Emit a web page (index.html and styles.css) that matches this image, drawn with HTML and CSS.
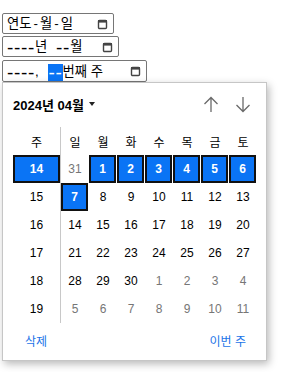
FILE: index.html
```html
<!DOCTYPE html>
<html lang="ko">
<head>
<meta charset="utf-8">
<link rel="stylesheet" href="styles.css">
</head>
<body>
<div class="fields">
  <div class="field f1">
    <span class="val">연도<span class="sep">-</span>월<span class="sep">-</span>일</span>
    <svg class="cal" width="11" height="12" viewBox="0 0 11 12"><rect x="1.5" y="2.5" width="8" height="8" rx="1" fill="none" stroke="#444" stroke-width="1.4"/><rect x="1" y="2" width="9" height="2.6" fill="#444"/></svg>
  </div>
  <div class="field f2">
    <span class="val"><span class="d">----</span>년 <span class="d gap">--</span>월</span>
    <svg class="cal" width="11" height="12" viewBox="0 0 11 12"><rect x="1.5" y="2.5" width="8" height="8" rx="1" fill="none" stroke="#444" stroke-width="1.4"/><rect x="1" y="2" width="9" height="2.6" fill="#444"/></svg>
  </div>
  <div class="field f3">
    <span class="val"><span class="d">----</span>, <span class="d sel gap2">--</span>번째 주</span>
    <svg class="cal" width="11" height="12" viewBox="0 0 11 12"><rect x="1.5" y="2.5" width="8" height="8" rx="1" fill="none" stroke="#444" stroke-width="1.4"/><rect x="1" y="2" width="9" height="2.6" fill="#444"/></svg>
  </div>
</div>

<div class="picker">
  <div class="head">
    <div class="title">2024년 04월 <span class="tri"></span></div>
    <div class="navs">
      <svg class="nav" width="16" height="17" viewBox="0 0 16 17"><path d="M8 1.5V16M1.5 8L8 1.5L14.5 8" fill="none" stroke="#6a6a6a" stroke-width="1.3"/></svg>
      <svg class="nav" width="16" height="17" viewBox="0 0 16 17"><path d="M8 1V15.5M1.5 9L8 15.5L14.5 9" fill="none" stroke="#6a6a6a" stroke-width="1.3"/></svg>
    </div>
  </div>
  <div class="grid">
    <div class="divider"></div>
    <div class="c wk">주</div><div class="c" style="grid-column:3">일</div><div class="c">월</div><div class="c">화</div><div class="c">수</div><div class="c">목</div><div class="c">금</div><div class="c">토</div>

    <div class="c wk"><span class="box wbox">14</span></div><div class="c o" style="grid-column:3">31</div><div class="c"><span class="box">1</span></div><div class="c"><span class="box">2</span></div><div class="c"><span class="box">3</span></div><div class="c"><span class="box">4</span></div><div class="c"><span class="box">5</span></div><div class="c"><span class="box">6</span></div>

    <div class="c wk">15</div><div class="c" style="grid-column:3"><span class="box">7</span></div><div class="c">8</div><div class="c">9</div><div class="c">10</div><div class="c">11</div><div class="c">12</div><div class="c">13</div>

    <div class="c wk">16</div><div class="c" style="grid-column:3">14</div><div class="c">15</div><div class="c">16</div><div class="c">17</div><div class="c">18</div><div class="c">19</div><div class="c">20</div>

    <div class="c wk">17</div><div class="c" style="grid-column:3">21</div><div class="c">22</div><div class="c">23</div><div class="c">24</div><div class="c">25</div><div class="c">26</div><div class="c">27</div>

    <div class="c wk">18</div><div class="c" style="grid-column:3">28</div><div class="c">29</div><div class="c">30</div><div class="c o">1</div><div class="c o">2</div><div class="c o">3</div><div class="c o">4</div>

    <div class="c wk">19</div><div class="c o" style="grid-column:3">5</div><div class="c o">6</div><div class="c o">7</div><div class="c o">8</div><div class="c o">9</div><div class="c o">10</div><div class="c o">11</div>
  </div>
  <div class="foot">
    <span class="link">삭제</span>
    <span class="link">이번 주</span>
  </div>
</div>
</body>
</html>
```

FILE: styles.css
```css
html, body {
  margin: 0;
  padding: 0;
  background: #fff;
}
body {
  padding: 13px 0 0 2px;
  font-family: "Liberation Sans", "Noto Sans CJK KR", Arial, sans-serif;
  color: #000;
}
.fields {
  display: flex;
  flex-direction: column;
  align-items: flex-start;
}
.field {
  box-sizing: border-box;
  height: 21px;
  border: 1px solid #767676;
  border-radius: 2px;
  display: flex;
  align-items: center;
  justify-content: space-between;
  padding: 0 5px 0 4px;
  font-size: 13.33px;
  white-space: pre;
}
.f1 { width: 112px; margin-bottom: 2px; }
.f2 { width: 117px; margin-bottom: 3px; }
.f3 { width: 145px; height: 22px; }
.val { display: flex; align-items: center; line-height: 17px; }
.sep { padding: 0 2px; }
.d {
  font-size: 19px;
  letter-spacing: 0.7px;
  line-height: 17px;
  position: relative;
  top: 1px;
}
.gap { margin-left: 5px; }
.gap2 { margin-left: 5px; }
.sel {
  background: #0a74f5;
  color: #fff;
  padding-left: 1px;
}
.cal { display: block; flex: none; }

.picker {
  position: absolute;
  left: 2px;
  top: 82px;
  width: 265px;
  height: 279px;
  box-sizing: border-box;
  border: 1px solid #c6c6c6;
  background: #fff;
  box-shadow: 2px 3px 8px rgba(0, 0, 0, 0.28);
  padding: 10px 9px 0 10px;
  display: flex;
  flex-direction: column;
}
.head {
  height: 22px;
  display: flex;
  align-items: center;
  justify-content: space-between;
  margin-bottom: 12px;
}
.title {
  font-size: 13px;
  font-weight: bold;
  display: flex;
  align-items: center;
  white-space: pre;
}
.tri {
  width: 0;
  height: 0;
  border-left: 3.5px solid transparent;
  border-right: 3.5px solid transparent;
  border-top: 4px solid #222;
  margin-left: 1px;
}
.navs {
  display: flex;
  gap: 16px;
  padding-right: 6px;
}
.nav { display: block; }

.grid {
  display: grid;
  grid-template-columns: 47px 1px repeat(7, 28px);
  grid-template-rows: repeat(7, 28px);
  font-size: 12px;
}
.divider {
  grid-column: 2;
  grid-row: 1 / 8;
  background: #c8c8c8;
}
.c {
  display: flex;
  align-items: center;
  justify-content: center;
}
.wk { grid-column: 1; }
.o { color: #767676; }
.box {
  box-sizing: border-box;
  width: 27px;
  height: 28px;
  margin-right: 1px;
  background: #0a74f5;
  border: 2.5px solid #111;
  color: #fff;
  font-weight: bold;
  display: flex;
  align-items: center;
  justify-content: center;
}
.wbox {
  width: 47px;
  margin-right: 0;
}
.foot {
  flex: 1;
  display: flex;
  align-items: center;
  justify-content: space-between;
  padding: 0 11px 0 12px;
  margin-top: -2px;
}
.link {
  color: #1a73e8;
  font-size: 12px;
  white-space: pre;
}
```
